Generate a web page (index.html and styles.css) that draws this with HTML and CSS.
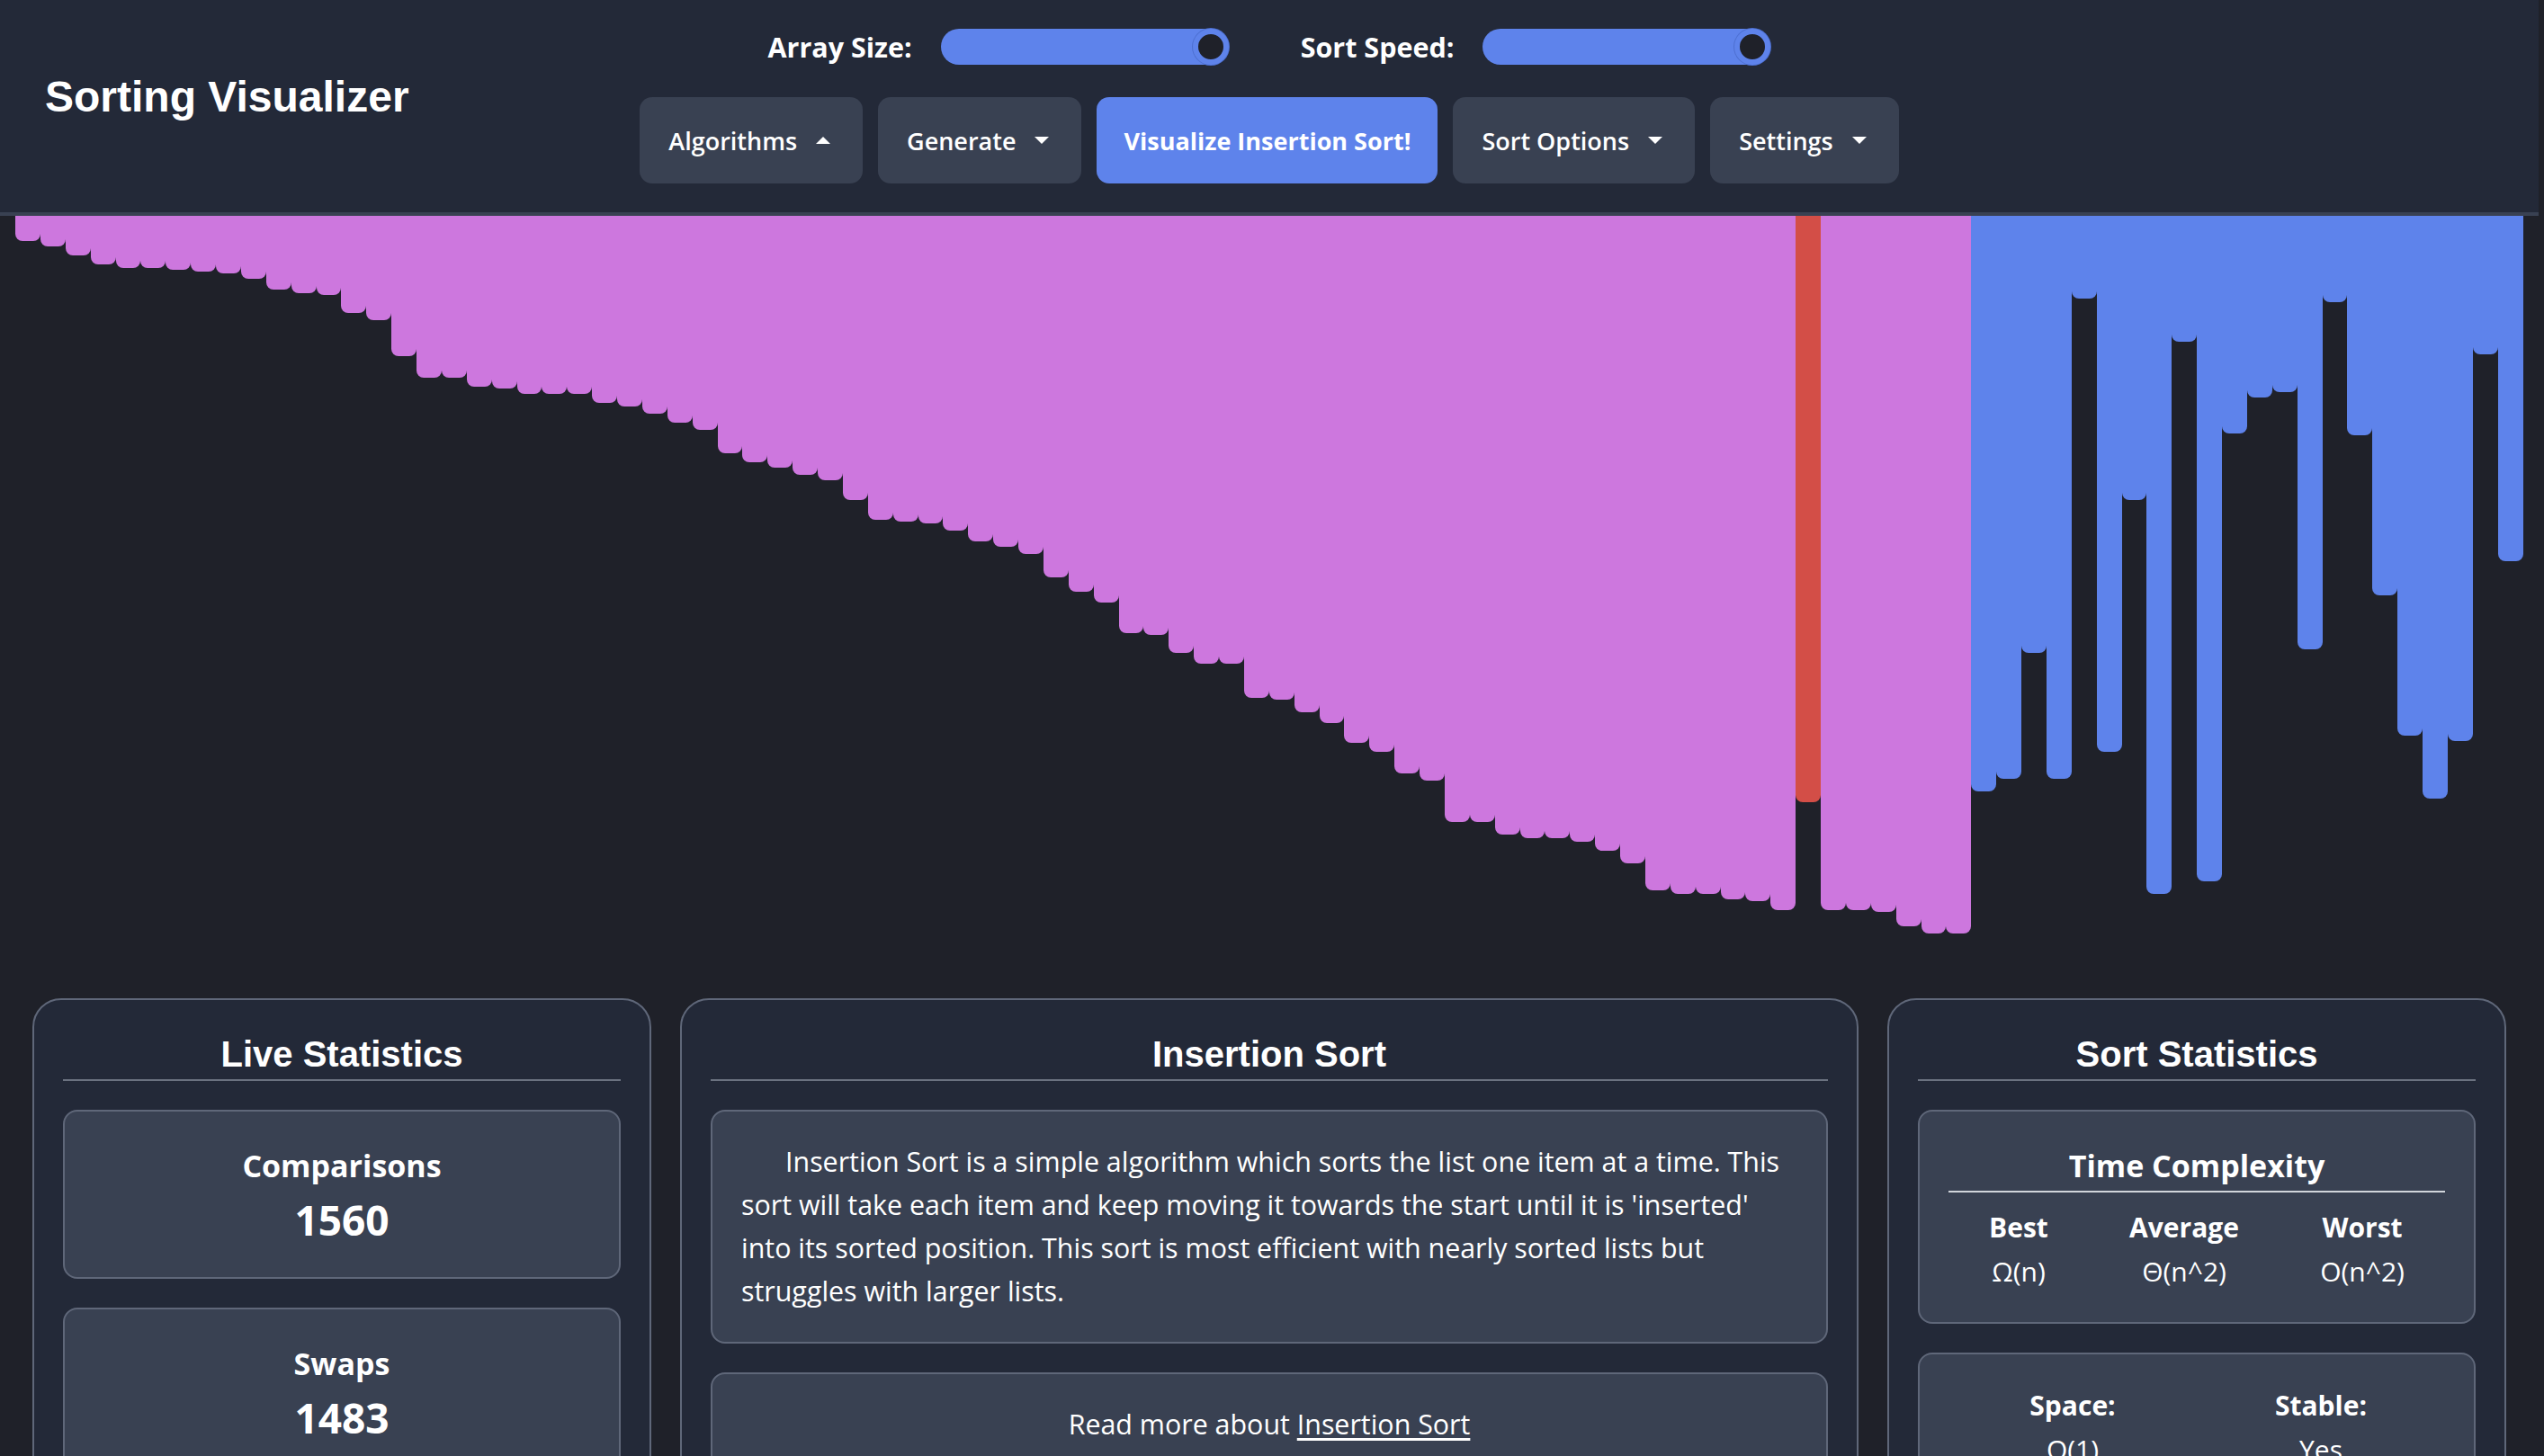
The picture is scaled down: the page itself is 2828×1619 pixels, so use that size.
FILE: index.html
```html
<!DOCTYPE html>
<html lang="en">
<head>
<meta charset="utf-8">
<title>Sorting Visualizer</title>
<link rel="stylesheet" href="styles.css">
</head>
<body>
<div class="app">
  <header class="topbar">
    <h1 class="brand">Sorting Visualizer</h1>
    <nav class="controls">
      <div class="sliders">
        <label class="slider"><span class="slider-label">Array Size:</span><input type="range" min="5" max="100" value="100"></label>
        <label class="slider"><span class="slider-label">Sort Speed:</span><input type="range" min="1" max="10" value="10"></label>
      </div>
      <div class="menu">
        <button class="btn caret caret-up">Algorithms</button>
        <button class="btn caret">Generate</button>
        <button class="btn btn-primary">Visualize Insertion Sort!</button>
        <button class="btn caret">Sort Options</button>
        <button class="btn caret">Settings</button>
      </div>
    </nav>
    <div class="topbar-spacer"></div>
  </header>

  <main class="bars">
    <div class="bar sorted" style="height:28px"></div>
    <div class="bar sorted" style="height:34px"></div>
    <div class="bar sorted" style="height:44px"></div>
    <div class="bar sorted" style="height:54px"></div>
    <div class="bar sorted" style="height:58px"></div>
    <div class="bar sorted" style="height:58px"></div>
    <div class="bar sorted" style="height:60px"></div>
    <div class="bar sorted" style="height:62px"></div>
    <div class="bar sorted" style="height:64px"></div>
    <div class="bar sorted" style="height:70px"></div>
    <div class="bar sorted" style="height:82px"></div>
    <div class="bar sorted" style="height:86px"></div>
    <div class="bar sorted" style="height:88px"></div>
    <div class="bar sorted" style="height:108px"></div>
    <div class="bar sorted" style="height:116px"></div>
    <div class="bar sorted" style="height:156px"></div>
    <div class="bar sorted" style="height:180px"></div>
    <div class="bar sorted" style="height:180px"></div>
    <div class="bar sorted" style="height:190px"></div>
    <div class="bar sorted" style="height:192px"></div>
    <div class="bar sorted" style="height:198px"></div>
    <div class="bar sorted" style="height:198px"></div>
    <div class="bar sorted" style="height:198px"></div>
    <div class="bar sorted" style="height:208px"></div>
    <div class="bar sorted" style="height:212px"></div>
    <div class="bar sorted" style="height:220px"></div>
    <div class="bar sorted" style="height:230px"></div>
    <div class="bar sorted" style="height:238px"></div>
    <div class="bar sorted" style="height:264px"></div>
    <div class="bar sorted" style="height:274px"></div>
    <div class="bar sorted" style="height:280px"></div>
    <div class="bar sorted" style="height:288px"></div>
    <div class="bar sorted" style="height:294px"></div>
    <div class="bar sorted" style="height:316px"></div>
    <div class="bar sorted" style="height:338px"></div>
    <div class="bar sorted" style="height:340px"></div>
    <div class="bar sorted" style="height:342px"></div>
    <div class="bar sorted" style="height:350px"></div>
    <div class="bar sorted" style="height:362px"></div>
    <div class="bar sorted" style="height:368px"></div>
    <div class="bar sorted" style="height:376px"></div>
    <div class="bar sorted" style="height:402px"></div>
    <div class="bar sorted" style="height:418px"></div>
    <div class="bar sorted" style="height:430px"></div>
    <div class="bar sorted" style="height:464px"></div>
    <div class="bar sorted" style="height:466px"></div>
    <div class="bar sorted" style="height:486px"></div>
    <div class="bar sorted" style="height:498px"></div>
    <div class="bar sorted" style="height:498px"></div>
    <div class="bar sorted" style="height:536px"></div>
    <div class="bar sorted" style="height:538px"></div>
    <div class="bar sorted" style="height:552px"></div>
    <div class="bar sorted" style="height:564px"></div>
    <div class="bar sorted" style="height:586px"></div>
    <div class="bar sorted" style="height:596px"></div>
    <div class="bar sorted" style="height:620px"></div>
    <div class="bar sorted" style="height:628px"></div>
    <div class="bar sorted" style="height:674px"></div>
    <div class="bar sorted" style="height:674px"></div>
    <div class="bar sorted" style="height:688px"></div>
    <div class="bar sorted" style="height:692px"></div>
    <div class="bar sorted" style="height:692px"></div>
    <div class="bar sorted" style="height:696px"></div>
    <div class="bar sorted" style="height:706px"></div>
    <div class="bar sorted" style="height:720px"></div>
    <div class="bar sorted" style="height:750px"></div>
    <div class="bar sorted" style="height:754px"></div>
    <div class="bar sorted" style="height:754px"></div>
    <div class="bar sorted" style="height:760px"></div>
    <div class="bar sorted" style="height:762px"></div>
    <div class="bar sorted" style="height:772px"></div>
    <div class="bar current" style="height:652px"></div>
    <div class="bar sorted" style="height:772px"></div>
    <div class="bar sorted" style="height:772px"></div>
    <div class="bar sorted" style="height:774px"></div>
    <div class="bar sorted" style="height:790px"></div>
    <div class="bar sorted" style="height:798px"></div>
    <div class="bar sorted" style="height:798px"></div>
    <div class="bar" style="height:640px"></div>
    <div class="bar" style="height:626px"></div>
    <div class="bar" style="height:486px"></div>
    <div class="bar" style="height:626px"></div>
    <div class="bar" style="height:92px"></div>
    <div class="bar" style="height:596px"></div>
    <div class="bar" style="height:316px"></div>
    <div class="bar" style="height:754px"></div>
    <div class="bar" style="height:140px"></div>
    <div class="bar" style="height:740px"></div>
    <div class="bar" style="height:242px"></div>
    <div class="bar" style="height:202px"></div>
    <div class="bar" style="height:196px"></div>
    <div class="bar" style="height:482px"></div>
    <div class="bar" style="height:96px"></div>
    <div class="bar" style="height:244px"></div>
    <div class="bar" style="height:422px"></div>
    <div class="bar" style="height:578px"></div>
    <div class="bar" style="height:648px"></div>
    <div class="bar" style="height:584px"></div>
    <div class="bar" style="height:154px"></div>
    <div class="bar" style="height:384px"></div>
  </main>

  <section class="panels">
    <article class="card">
      <h2 class="card-title">Live Statistics</h2>
      <div class="stack">
        <div class="box stat">
          <div class="stat-label">Comparisons</div>
          <div class="stat-value">1560</div>
        </div>
        <div class="box stat">
          <div class="stat-label">Swaps</div>
          <div class="stat-value">1483</div>
        </div>
      </div>
    </article>

    <article class="card">
      <h2 class="card-title">Insertion Sort</h2>
      <div class="stack">
        <div class="box description-box">
          <p class="description">Insertion Sort is a simple algorithm which sorts the list one item at a time. This sort will take each item and keep moving it towards the start until it is 'inserted' into its sorted position. This sort is most efficient with nearly sorted lists but struggles with larger lists.</p>
        </div>
        <div class="box read-more">
          Read more about <a href="#" class="link">Insertion Sort</a>
        </div>
      </div>
    </article>

    <article class="card">
      <h2 class="card-title">Sort Statistics</h2>
      <div class="stack">
        <div class="box">
          <h3 class="sub-title">Time Complexity</h3>
          <div class="complexity">
            <div class="metric"><div class="metric-label">Best</div><div class="metric-value">Ω(n)</div></div>
            <div class="metric"><div class="metric-label">Average</div><div class="metric-value">Θ(n^2)</div></div>
            <div class="metric"><div class="metric-label">Worst</div><div class="metric-value">O(n^2)</div></div>
          </div>
        </div>
        <div class="box props">
          <div class="metric"><div class="metric-label">Space:</div><div class="metric-value">O(1)</div></div>
          <div class="metric"><div class="metric-label">Stable:</div><div class="metric-value">Yes</div></div>
        </div>
      </div>
    </article>
  </section>
</div>
</body>
</html>
```

FILE: styles.css
```css
* { box-sizing: border-box; }

html, body {
  margin: 0;
  padding: 0;
  background: #1f2129;
  color: #ffffff;
  font-family: "Open Sans", "Noto Sans", sans-serif;
}

body { overflow: hidden; }

.app {
  margin-right: 6px;
  height: 100vh;
  overflow: hidden;
}

/* ---------- header ---------- */
.topbar {
  display: grid;
  grid-template-columns: 1fr auto 1fr;
  padding: 32px 50px;
  background: #232938;
  border-bottom: 4px solid #394152;
}

.brand {
  align-self: start;
  margin: 48px 0 0;
  font-family: "Liberation Sans", Arial, sans-serif;
  font-weight: 700;
  font-size: 48px;
  line-height: 56px;
  white-space: nowrap;
}

.controls {
  display: flex;
  flex-direction: column;
  align-items: center;
  gap: 36px;
}

.sliders {
  display: flex;
  align-items: center;
  gap: 80px;
  height: 40px;
}

.slider {
  display: flex;
  align-items: center;
  gap: 32px;
}

.slider-label {
  font-weight: 700;
  font-size: 30.5px;
  line-height: 40px;
}

.slider input[type="range"] {
  -webkit-appearance: none;
  appearance: none;
  width: 320px;
  height: 40px;
  margin: 0;
  border-radius: 20px;
  background: #5e83eb;
  outline: none;
}

.slider input[type="range"]::-webkit-slider-thumb {
  -webkit-appearance: none;
  appearance: none;
  width: 40px;
  height: 40px;
  border-radius: 50%;
  background: #1f2129;
  border: 6px solid #5e83eb;
  box-shadow: 0 0 0 1px #4d6fd0;
}

.menu {
  display: flex;
  gap: 17px;
}

.btn {
  display: inline-flex;
  align-items: center;
  height: 96px;
  padding: 0 36px 0 32px;
  border: 0;
  border-radius: 14px;
  background: #394152;
  color: #ffffff;
  font-family: "Open Sans", "Noto Sans", sans-serif;
  font-weight: 600;
  font-size: 27px;
  white-space: nowrap;
}

.btn-primary {
  padding: 0 30px;
  background: #5e83eb;
  font-weight: 700;
}

.caret::after {
  content: "";
  display: inline-block;
  margin-left: 21px;
  border-top: 8px solid #ffffff;
  border-left: 8px solid transparent;
  border-right: 8px solid transparent;
}

.caret-up::after {
  border-top: 0;
  border-bottom: 8px solid #ffffff;
}

/* ---------- bars ---------- */
.bars {
  display: flex;
  align-items: flex-start;
  height: 838px;
  padding: 0 17px;
}

.bar {
  flex: 1 1 0;
  background: #5e83eb;
  border-radius: 0 0 8px 8px;
}

.bar.sorted { background: #cd77de; }
.bar.current { background: #d34e47; }

/* ---------- panels ---------- */
.panels {
  display: grid;
  grid-template-columns: 688px 1fr 688px;
  align-items: start;
  gap: 32px;
  padding: 32px 36px 0;
}

.card {
  background: #232938;
  border: 2px solid #5f6779;
  border-radius: 32px;
  padding: 32px;
}

.card-title {
  margin: 0 0 32px;
  border-bottom: 2px solid #6b7280;
  font-family: "Liberation Sans", Arial, sans-serif;
  font-weight: 700;
  font-size: 40px;
  line-height: 56px;
  text-align: center;
}

.stack {
  display: flex;
  flex-direction: column;
  gap: 32px;
}

.box {
  background: #394152;
  border: 2px solid #5f6779;
  border-radius: 16px;
  padding: 32px;
}

.stat { text-align: center; }

.stat-label {
  font-weight: 700;
  font-size: 34px;
  line-height: 56px;
}

.stat-value {
  font-weight: 700;
  font-size: 46px;
  line-height: 64px;
}

.description-box { padding-right: 40px; }

.description {
  margin: 0;
  font-size: 30.4px;
  line-height: 48px;
  text-indent: 49px;
}

.read-more {
  text-align: center;
  font-size: 30.4px;
  line-height: 48px;
}

.link {
  color: #ffffff;
  text-decoration: underline;
  text-underline-offset: 4px;
}

.sub-title {
  margin: 0 0 14px;
  border-bottom: 2px solid #d1d5db;
  font-weight: 700;
  font-size: 34px;
  line-height: 56px;
  text-align: center;
}

.complexity {
  display: flex;
  justify-content: space-around;
}

.metric { text-align: center; }

.metric-label {
  font-weight: 700;
  font-size: 30px;
  line-height: 50px;
}

.metric-value {
  font-size: 30px;
  line-height: 48px;
}

.props {
  display: grid;
  grid-template-columns: 1fr 1fr;
}
```
